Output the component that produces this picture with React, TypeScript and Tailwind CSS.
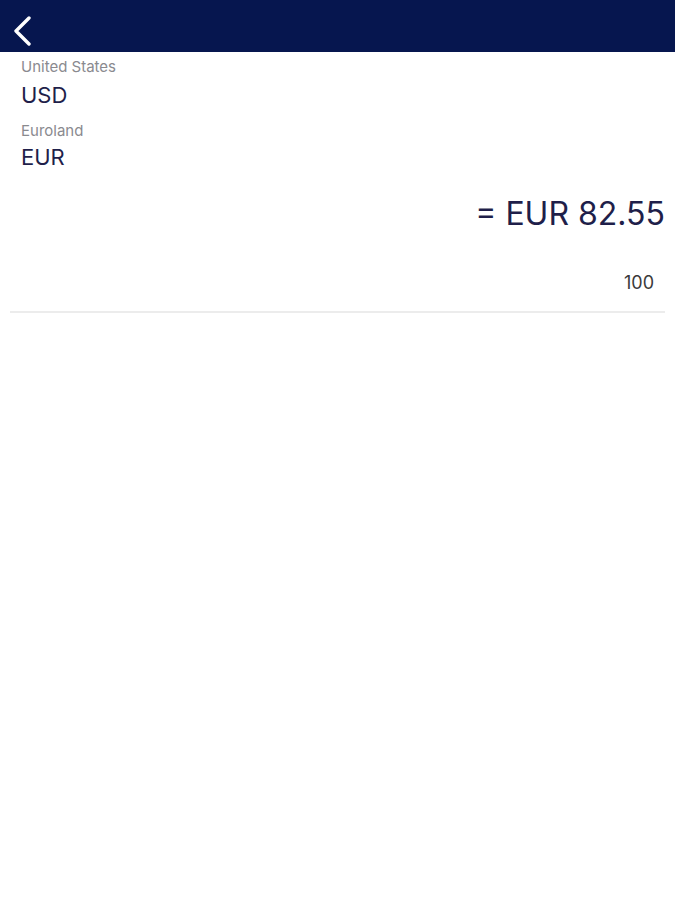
import React from "react";

export default function App() {
  return (
    <div className="min-h-[900px] w-[675px] bg-white" style={{ fontFamily: "Inter, 'Open Sans', sans-serif" }}>
      <div className="flex h-[52px] items-start bg-[#06164f] px-[12px] pt-[16px]">
        <svg width="20" height="30" viewBox="0 0 20 30" fill="none">
          <path d="M17 2 L4 15 L17 28" stroke="white" strokeWidth="3.4" strokeLinecap="round" strokeLinejoin="round" />
        </svg>
      </div>
      <div className="px-[21px] pt-[5px]">
        <div className="text-[15px] leading-[20px] text-[#8a8a8f]">United States</div>
        <div className="mt-[4px] text-[22px] leading-[28px] text-[#1f1f4a]">USD</div>
        <div className="mt-[12px] text-[15px] leading-[20px] text-[#8a8a8f]">Euroland</div>
        <div className="mt-[2px] text-[22px] leading-[28px] text-[#1f1f4a]">EUR</div>
      </div>
      <div className="flex justify-end pr-[10px] pt-[23px]">
        <div className="text-[32px] leading-[40px] text-[#1f1f4a]">= EUR 82.55</div>
      </div>
      <div className="flex justify-end pr-[21px] pt-[37px]">
        <div className="text-[18px] leading-[24px] text-[#3a3a3a]">100</div>
      </div>
      <div className="mx-[10px] mt-[16px] h-[2px] bg-[#ececec]" />
    </div>
  );
}
